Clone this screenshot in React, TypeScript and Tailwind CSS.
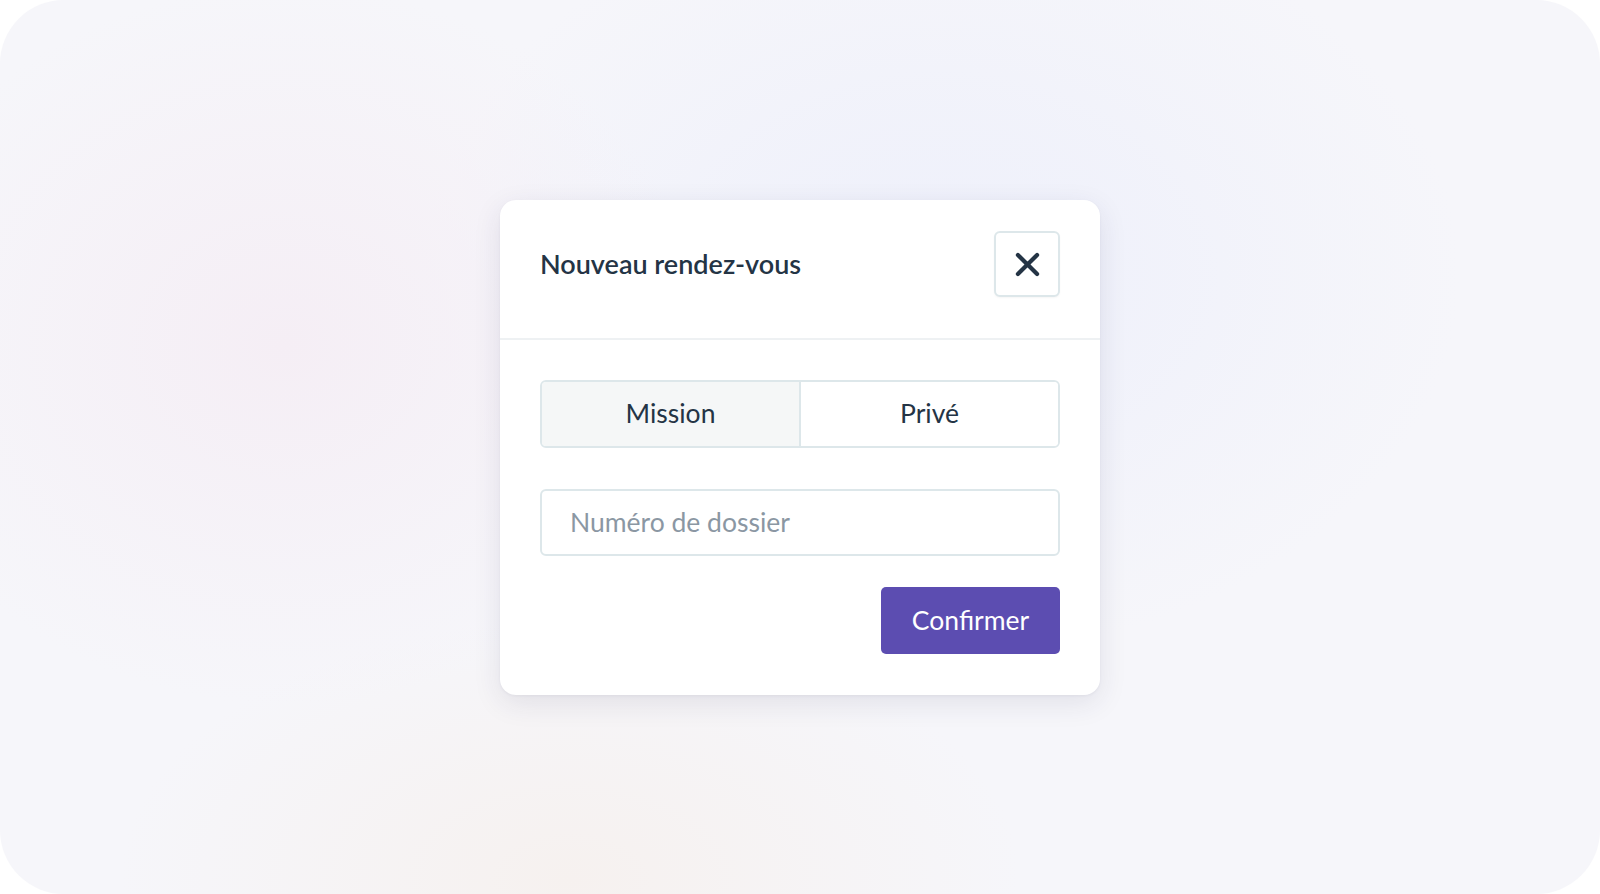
import React from "react";

export default function App() {
  return (
    <div className="w-[1600px] h-[894px] bg-white overflow-hidden font-['Lato',sans-serif]">
      <div className="w-[1600px] h-[894px] rounded-[64px] bg-[#f6f6fa] bg-[radial-gradient(ellipse_420px_360px_at_285px_345px,#f5eef5_0%,rgba(245,238,245,0.6)_40%,rgba(245,238,245,0)_100%),radial-gradient(ellipse_520px_380px_at_940px_275px,#eef0fb_0%,rgba(238,240,251,0.6)_45%,rgba(238,240,251,0)_100%),radial-gradient(ellipse_450px_260px_at_570px_880px,#f6f1ef_0%,rgba(246,241,239,0)_100%)] flex items-start justify-center">
        <div className="mt-[200px] w-[600px] bg-white rounded-[16px] shadow-[0_8px_28px_rgba(40,40,80,0.10),0_1px_3px_rgba(40,40,80,0.05)]">
          <div className="flex items-center justify-between px-[40px] pt-[31px] pb-[41px] border-b-2 border-[#eef1f3]">
            <h2 className="text-[27px] font-semibold text-[#243445]">Nouveau rendez-vous</h2>
            <button className="w-[66px] h-[66px] flex items-center justify-center rounded-[6px] border-2 border-[#dde7ea] bg-white shadow-[0_1px_2px_rgba(0,0,0,0.04)]">
              <svg width="25" height="25" viewBox="0 0 24 24" fill="none" stroke="#243445" strokeWidth="4" strokeLinecap="round">
                <path d="M2.8 2.8L21.2 21.2M21.2 2.8L2.8 21.2" />
              </svg>
            </button>
          </div>
          <div className="px-[40px] pt-[40px] pb-[41px] flex flex-col">
            <div className="flex h-[68px] rounded-[6px] border-2 border-[#dde7ea] overflow-hidden">
              <div className="flex-1 flex items-center justify-center bg-[#f5f7f7] border-r-2 border-[#dde7ea] text-[26.5px] text-[#243445]">Mission</div>
              <div className="flex-1 flex items-center justify-center bg-white text-[26.5px] text-[#243445]">Privé</div>
            </div>
            <div className="mt-[41px] h-[67px] rounded-[6px] border-2 border-[#dde7ea] flex items-center px-[28px] text-[26.5px] text-[#8b97a3]">
              Numéro de dossier
            </div>
            <div className="mt-[31px] flex justify-end">
              <button className="w-[179px] h-[67px] rounded-[5px] bg-[#5c4db1] text-white text-[26.5px] flex items-center justify-center">Confirmer</button>
            </div>
          </div>
        </div>
      </div>
    </div>
  );
}
